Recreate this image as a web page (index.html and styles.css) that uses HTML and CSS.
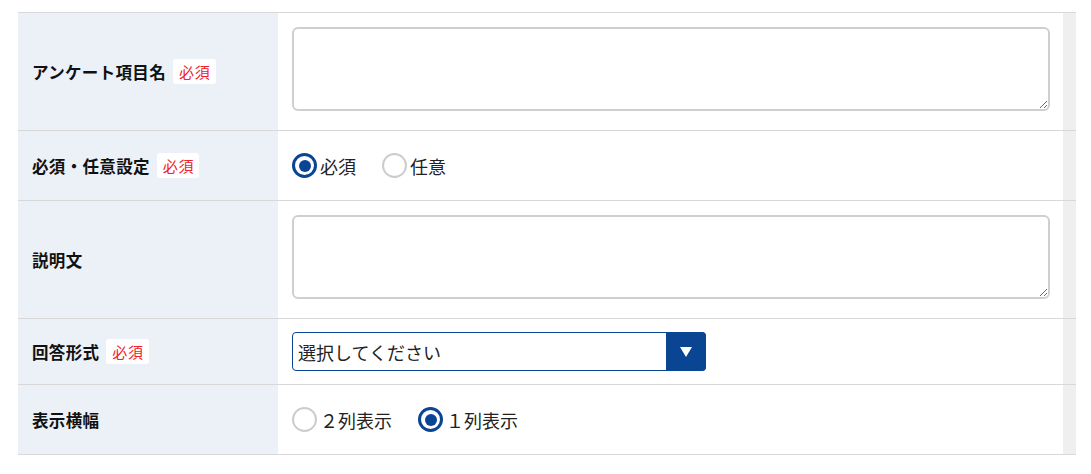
FILE: index.html
```
<!DOCTYPE html>
<html lang="ja">
<head>
	<meta charset="utf-8">
	<title>アンケート項目</title>
	<link rel="stylesheet" href="styles.css">
</head>
<body>

<div class="form-table">

	<div class="form-row">
		<div class="form-label">アンケート項目名<span class="required">必須</span></div>
		<div class="form-field form-field-area">
			<textarea class="text-area"></textarea>
		</div>
		<div class="form-gutter"></div>
	</div>

	<div class="form-row">
		<div class="form-label">必須・任意設定<span class="required">必須</span></div>
		<div class="form-field">
			<label class="radio"><input type="radio" name="req" checked><span class="radio-mark"></span>必須</label>
			<label class="radio"><input type="radio" name="req"><span class="radio-mark"></span>任意</label>
		</div>
		<div class="form-gutter"></div>
	</div>

	<div class="form-row">
		<div class="form-label">説明文</div>
		<div class="form-field form-field-area">
			<textarea class="text-area"></textarea>
		</div>
		<div class="form-gutter"></div>
	</div>

	<div class="form-row">
		<div class="form-label">回答形式<span class="required">必須</span></div>
		<div class="form-field form-field-select">
			<div class="select-box">
				<select>
					<option>選択してください</option>
				</select>
				<span class="select-arrow"></span>
			</div>
		</div>
		<div class="form-gutter"></div>
	</div>

	<div class="form-row">
		<div class="form-label">表示横幅</div>
		<div class="form-field">
			<label class="radio"><input type="radio" name="cols"><span class="radio-mark"></span>２列表示</label>
			<label class="radio"><input type="radio" name="cols" checked><span class="radio-mark"></span>１列表示</label>
		</div>
		<div class="form-gutter"></div>
	</div>

</div>

</body>
</html>
```

FILE: styles.css
```
* {
	box-sizing: border-box;
}

body {
	margin: 0;
	padding: 12px 15px 0 18px;
	font-family: "Noto Sans CJK JP", "Noto Sans", sans-serif;
	color: #222;
	background: white;
}

/* Form table */
.form-table {
	width: 1058px;
	border-top: 1px solid #d8d8d8;
}

.form-row {
	display: grid;
	grid-template-columns: 260px 1fr 13px;
	border-bottom: 1px solid #d8d8d8;
}

.form-label {
	display: flex;
	align-items: center;
	gap: 7px;
	padding: 0 14px;
	background: #ecf1f8;
	color: #111;
	font-size: 16.5px;
	font-weight: bold;
	letter-spacing: 0.02em;
}

.form-field {
	display: flex;
	align-items: center;
	gap: 26px;
	padding: 0 13px 0 14px;
	height: 69px;
}

.form-field-area {
	height: auto;
	padding-top: 14px;
	padding-bottom: 19px;
}

.form-field-select {
	height: 65px;
}

.form-gutter {
	background: #efefef;
}

/* Required badge */
.required {
	display: inline-block;
	padding: 1px 5px 1px 6px;
	border-radius: 3px;
	background: white;
	color: #f0202c;
	font-size: 15px;
	font-weight: normal;
	letter-spacing: 0.05em;
	line-height: 23px;
}

/* Text areas */
.text-area {
	display: block;
	width: 100%;
	height: 84px;
	margin: 0;
	border: 2px solid #cfcfcf;
	border-radius: 6px;
	background: white;
	font: inherit;
}

/* Radio buttons */
.radio {
	display: flex;
	align-items: center;
	gap: 3px;
	font-size: 18px;
	cursor: pointer;
}

.radio input {
	display: none;
}

.radio-mark {
	width: 25px;
	height: 25px;
	border: 2px solid #cccccc;
	border-radius: 50%;
	display: flex;
	align-items: center;
	justify-content: center;
}

.radio input:checked + .radio-mark {
	border: 3px solid #0a4594;
}

.radio input:checked + .radio-mark::after {
	content: "";
	width: 12px;
	height: 12px;
	border-radius: 50%;
	background: #0a4594;
}

/* Select box with blue arrow button */
.select-box {
	position: relative;
	width: 414px;
	height: 39px;
}

.select-box select {
	-webkit-appearance: none;
	appearance: none;
	width: 100%;
	height: 100%;
	padding: 0 46px 0 5px;
	border: 1px solid #0a4594;
	border-radius: 4px;
	background: white;
	color: #222;
	font-family: inherit;
	font-size: 18px;
	outline: none;
}

.select-arrow {
	position: absolute;
	top: 0;
	right: 0;
	width: 40px;
	height: 100%;
	border-radius: 0 4px 4px 0;
	background: #0a4594;
	pointer-events: none;
	display: flex;
	align-items: center;
	justify-content: center;
}

.select-arrow::after {
	content: "";
	border-left: 6px solid transparent;
	border-right: 6px solid transparent;
	border-top: 10px solid white;
}
```
